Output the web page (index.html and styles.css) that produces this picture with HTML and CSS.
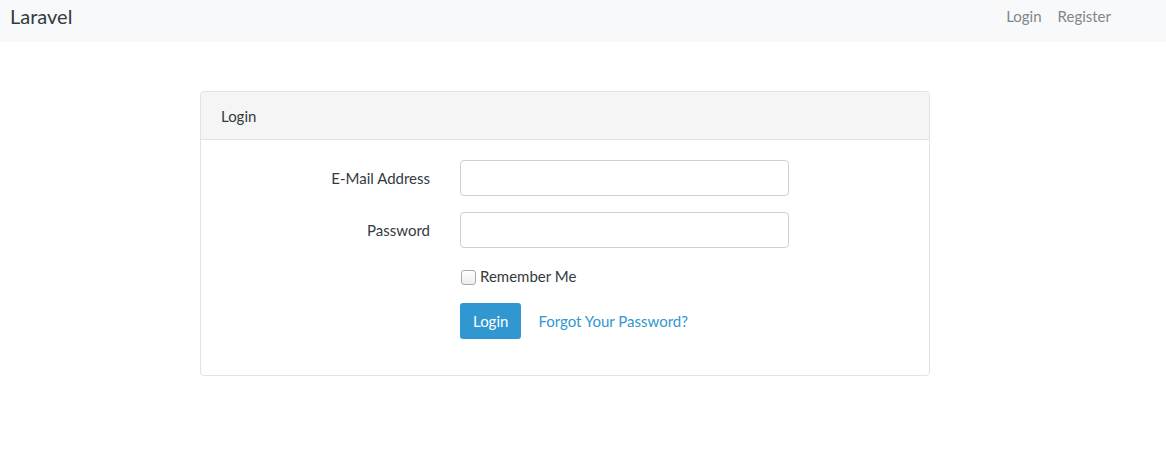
FILE: index.html
```html
<!DOCTYPE html>
<html lang="en">
<head>
<meta charset="utf-8">
<title>Laravel</title>
<link rel="stylesheet" href="styles.css">
</head>
<body>
<nav class="navbar">
  <a class="brand" href="#">Laravel</a>
  <ul class="nav-links">
    <li><a href="#">Login</a></li>
    <li><a href="#">Register</a></li>
  </ul>
</nav>
<main class="main">
  <section class="panel">
    <div class="panel-heading">Login</div>
    <form class="panel-body">
      <div class="form-row">
        <label class="form-label" for="email">E-Mail Address</label>
        <input class="form-input" id="email" type="email">
      </div>
      <div class="form-row">
        <label class="form-label" for="password">Password</label>
        <input class="form-input" id="password" type="password">
      </div>
      <div class="form-row remember-row">
        <span></span>
        <label class="remember"><input class="checkbox" type="checkbox">Remember Me</label>
      </div>
      <div class="form-row actions-row">
        <span></span>
        <div class="actions">
          <button class="btn" type="button">Login</button>
          <a class="link" href="#">Forgot Your Password?</a>
        </div>
      </div>
    </form>
  </section>
</main>
</body>
</html>
```

FILE: styles.css
```css
html, body {
  margin: 0;
  padding: 0;
  background: #ffffff;
}
body {
  font-family: "Lato", "Open Sans", sans-serif;
  font-size: 15px;
  color: #636b6f;
  line-height: 22px;
}
a { text-decoration: none; }

.navbar {
  display: flex;
  justify-content: space-between;
  align-items: flex-start;
  height: 42px;
  background: #f8f9fa;
  box-sizing: border-box;
  padding: 5px 55px 0 10px;
}
.brand {
  font-size: 20px;
  color: #333a40;
  line-height: 22px;
}
.nav-links {
  list-style: none;
  display: flex;
  gap: 16px;
  margin: 0;
  padding: 0;
}
.nav-links a {
  color: #80868c;
  font-size: 15px;
  line-height: 22px;
}

.main {
  padding: 49px 0 0 200px;
}
.panel {
  width: 730px;
  box-sizing: border-box;
  border: 1px solid #e2e2e2;
  border-radius: 4px;
  background: #fff;
}
.panel-heading {
  height: 48px;
  box-sizing: border-box;
  padding: 13px 20px 0;
  background: #f5f5f5;
  border-bottom: 1px solid #e2e2e2;
  border-radius: 3px 3px 0 0;
  color: #333a40;
}
.panel-body {
  padding: 20px 0 36px;
  margin: 0;
}
.form-row {
  display: grid;
  grid-template-columns: 229px 329px;
  column-gap: 30px;
  align-items: center;
  margin-bottom: 16px;
}
.form-row:last-child { margin-bottom: 0; }
.remember-row { margin-top: 17px; }
.actions-row { margin-top: 1px; }
.form-label {
  text-align: right;
  color: #343a40;
}
.form-input {
  height: 36px;
  box-sizing: border-box;
  border: 1px solid #ccd0d2;
  border-radius: 4px;
  padding: 6px 12px;
  font: inherit;
  margin: 0;
  outline: none;
}
.remember {
  display: flex;
  align-items: center;
  color: #343a40;
  height: 22px;
}
.checkbox {
  appearance: none;
  -webkit-appearance: none;
  width: 15px;
  height: 15px;
  margin: 3px 4px 0 1px;
  border: 1px solid #a9a9a9;
  border-radius: 3px;
  background: linear-gradient(#ffffff, #ededed);
  box-sizing: border-box;
}
.actions {
  display: flex;
  align-items: center;
  gap: 17px;
}
.btn {
  height: 36px;
  padding: 0 13px;
  border: none;
  border-radius: 3px;
  background: #3097d1;
  color: #fff;
  font: inherit;
  cursor: pointer;
}
.link {
  color: #3097d1;
}
```
